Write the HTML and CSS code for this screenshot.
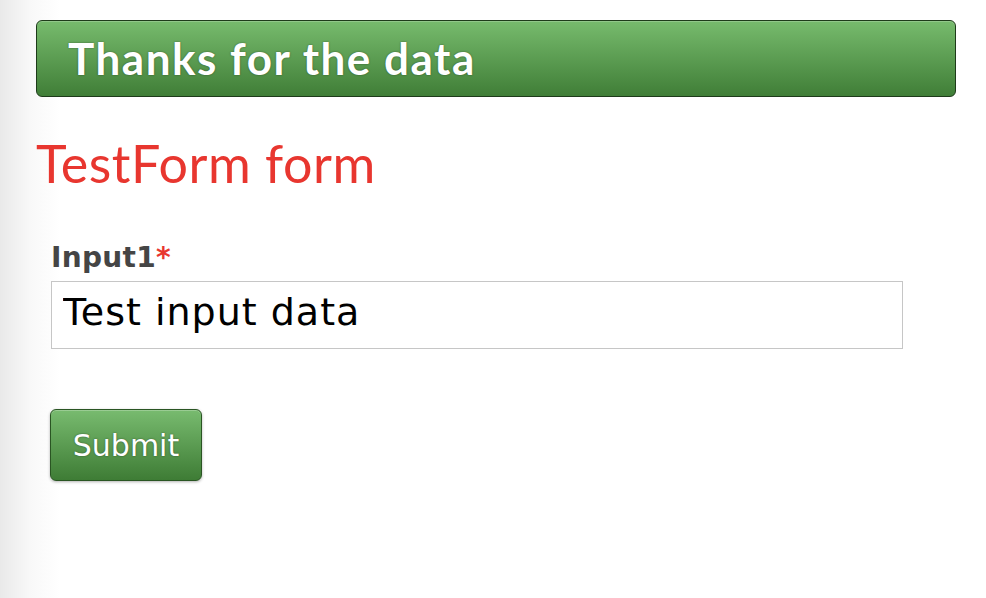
FILE: index.html
```html
<!DOCTYPE html>
<html lang="en">
<head>
  <meta charset="UTF-8">
  <title>TestForm form</title>
  <link rel="stylesheet" href="styles.css">
</head>
<body>

<div class="page">
  <div class="notice">Thanks for the data</div>

  <h1>TestForm form</h1>

  <form class="form" onsubmit="return false">
    <div class="field">
      <label for="input1">Input1<span class="req">*</span></label>
      <input id="input1" type="text" value="Test input data">
    </div>
    <button type="submit">Submit</button>
  </form>
</div>

</body>
</html>
```

FILE: styles.css
```css
html, body {
  height: 100%;
}
body {
  margin: 0;
  background: linear-gradient(to right, #e9e9e9 0, #f8f8f8 30px, #ffffff 60px);
  font-family: "DejaVu Sans", Verdana, sans-serif;
}
.page {
  padding: 20px 30px 0 36px;
  width: 920px;
}
.notice {
  height: 75px;
  border: 1px solid #1e3b1a;
  border-radius: 6px;
  background: linear-gradient(to bottom, #77bb6d, #407e37);
  box-shadow: inset 0 1px 0 rgba(255,255,255,0.2);
  color: #fff;
  font-family: Lato, "Open Sans", sans-serif;
  font-weight: bold;
  font-size: 44px;
  letter-spacing: 1.5px;
  line-height: 75px;
  padding-left: 31px;
  text-shadow: 0 0 2px rgba(0,0,0,0.45);
}
h1 {
  margin: 36px 0 0;
  color: #e8362f;
  font-family: Lato, "Open Sans", sans-serif;
  font-weight: normal;
  font-size: 52px;
  letter-spacing: 0.5px;
  line-height: 60px;
}
.form {
  padding: 49px 0 0 15px;
}
.field {
  margin-bottom: 60px;
}
label {
  display: block;
  color: #454545;
  font-weight: bold;
  font-size: 28px;
  letter-spacing: 0.3px;
  line-height: 32px;
  margin-bottom: 7px;
}
.req {
  color: #e8362f;
}
input {
  display: block;
  box-sizing: border-box;
  width: 852px;
  height: 68px;
  margin: 0;
  border: 1px solid #c6c6c6;
  padding: 0 11px 6px;
  font-family: "DejaVu Sans", Verdana, sans-serif;
  font-size: 38px;
  letter-spacing: 1px;
  color: #000;
  background: #fff;
  outline: none;
}
button {
  box-sizing: border-box;
  width: 152px;
  height: 72px;
  margin-left: -1px;
  border: 1px solid #2a5523;
  border-radius: 6px;
  background: linear-gradient(to bottom, #78bb6f, #3e7c35);
  box-shadow: 0 1px 3px rgba(0,0,0,0.3), inset 0 1px 0 rgba(255,255,255,0.25);
  color: #fff;
  font-family: "DejaVu Sans", Verdana, sans-serif;
  font-size: 30px;
  text-shadow: 0 0 2px rgba(0,0,0,0.45);
  padding: 0;
  cursor: pointer;
}
```
